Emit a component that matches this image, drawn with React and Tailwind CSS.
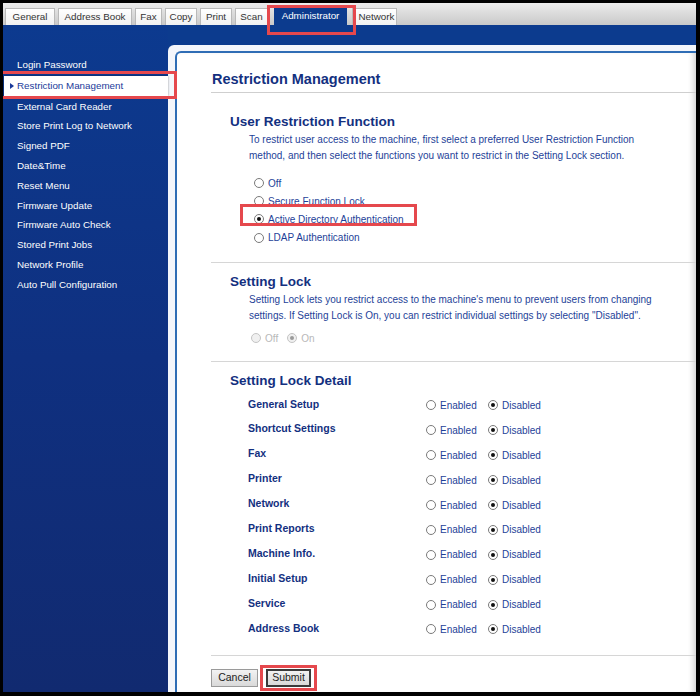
import React from "react";

const tabs = [
  { label: "General", w: 50 },
  { label: "Address Book", w: 74 },
  { label: "Fax", w: 27 },
  { label: "Copy", w: 32 },
  { label: "Print", w: 32 },
  { label: "Scan", w: 33 },
];

const sideItems = [
  "External Card Reader",
  "Store Print Log to Network",
  "Signed PDF",
  "Date&Time",
  "Reset Menu",
  "Firmware Update",
  "Firmware Auto Check",
  "Stored Print Jobs",
  "Network Profile",
  "Auto Pull Configuration",
];

const detailRows = [
  "General Setup",
  "Shortcut Settings",
  "Fax",
  "Printer",
  "Network",
  "Print Reports",
  "Machine Info.",
  "Initial Setup",
  "Service",
  "Address Book",
];

function Radio({ checked, disabled }) {
  return (
    <span
      className={
        disabled
          ? "inline-flex h-[10px] w-[10px] shrink-0 items-center justify-center rounded-full border border-[#c4c4c4] bg-[#f0f0f0]"
          : "inline-flex h-[10px] w-[10px] shrink-0 items-center justify-center rounded-full border border-[#7a7a7a] bg-white"
      }
    >
      {checked ? (
        <span
          className={
            disabled
              ? "h-[4px] w-[4px] rounded-full bg-[#9a9a9a]"
              : "h-[4px] w-[4px] rounded-full bg-[#111]"
          }
        />
      ) : null}
    </span>
  );
}

export default function App() {
  return (
    <div className="h-[696px] w-[700px] bg-black pb-[4px] pl-[3px] pr-[4px] pt-[3px] font-['Liberation_Sans',Arial,sans-serif]">
      <div className="relative flex h-full flex-col overflow-hidden bg-white">
        {/* tab bar */}
        <div className="flex h-[22px] shrink-0 items-end gap-[3px] bg-gradient-to-b from-[#ececec] to-[#c9c9c9] pl-[2px]">
          {tabs.map((t) => (
            <div
              key={t.label}
              style={{ width: t.w }}
              className="flex h-[17px] items-center justify-center border border-b-0 border-[#b9b9b9] bg-gradient-to-b from-white to-[#f1f1f1] text-[9.8px] text-[#333]"
            >
              {t.label}
            </div>
          ))}
          <div className="relative ml-[3px] flex h-[17px] w-[73px] items-center justify-center bg-[#0c3b8e] text-[9.8px] text-white">
            Administrator
            <div className="absolute left-[-7px] top-[-3px] h-[30px] w-[89px] border-[3px] border-[#e5484d]" />
          </div>
          <div className="ml-[2px] flex h-[17px] w-[45px] items-center justify-center border border-b-0 border-[#b9b9b9] bg-gradient-to-b from-white to-[#f1f1f1] pl-[4px] text-[9.8px] text-[#333]">
            Network
          </div>
        </div>

        <div className="flex min-h-0 flex-1">
          {/* sidebar */}
          <div className="relative w-[165px] shrink-0 bg-gradient-to-b from-[#0c3a8f] via-[#0f3080] to-[#112a70] pt-[30px] text-[9.8px] text-white">
            <div className="flex h-[20px] items-center pl-[14px]">Login Password</div>
            <div className="relative flex h-[22px] items-center">
              <div className="ml-[1px] flex h-[20px] w-[164px] items-center bg-white pl-[6px] text-[#1a3a9a] shadow-[0_0_2px_rgba(0,0,0,0.4)]">
                <svg width="4" height="6" viewBox="0 0 4 6" className="mr-[3px]">
                  <path d="M0 0 L4 3 L0 6 Z" fill="#1a3a9a" />
                </svg>
                Restriction Management
              </div>
              <div className="absolute left-[-3px] top-[-4px] z-10 h-[28px] w-[177px] border-[3px] border-[#e5484d]" />
            </div>
            {sideItems.map((s) => (
              <div key={s} className="flex h-[19.8px] items-center pl-[14px]">
                {s}
              </div>
            ))}
          </div>

          {/* main */}
          <div className="flex min-w-0 flex-1 flex-col bg-[#0c3b8e]">
            <div className="h-[20px] shrink-0" />
            <div className="flex min-h-0 flex-1 flex-col rounded-tl-[6px] bg-[#f4f6fb] pl-[7px] pt-[6px]">
              <div className="flex min-h-0 flex-1 flex-col rounded-tl-[6px] border-l-2 border-t-2 border-[#2f6db5] bg-white pl-[34px] pt-[17px] shadow-[inset_-6px_0_6px_-4px_rgba(0,0,0,0.2)]">
                <div className="border-b border-[#cfcfcf] pb-[4px] pl-[1px] text-[14.5px] font-bold leading-[18px] text-[#13307f]">
                  Restriction Management
                </div>

                {/* User restriction function */}
                <div className="border-b border-[#d6d6d6] pb-[15px] pt-[20px]">
                  <div className="pl-[19px] text-[13.5px] font-bold leading-[17px] text-[#13307f]">
                    User Restriction Function
                  </div>
                  <div className="mt-[2px] pl-[38px] text-[10px] leading-[16px] text-[#1e3f98]">
                    To restrict user access to the machine, first select a preferred User Restriction Function
                    <br />
                    method, and then select the functions you want to restrict in the Setting Lock section.
                  </div>
                  <div className="mt-[10px] flex flex-col pl-[43px] text-[10px] text-[#1e3f98]">
                    <div className="flex h-[18px] items-center gap-[4px]">
                      <Radio />
                      Off
                    </div>
                    <div className="flex h-[18px] items-center gap-[4px]">
                      <Radio />
                      Secure Function Lock
                    </div>
                    <div className="relative flex h-[18.5px] items-center gap-[4px]">
                      <Radio checked />
                      Active Directory Authentication
                      <div className="absolute left-[-14px] top-[-6px] h-[22px] w-[177px] border-[3px] border-[#e5484d]" />
                    </div>
                    <div className="flex h-[18.5px] items-center gap-[4px]">
                      <Radio />
                      LDAP Authentication
                    </div>
                  </div>
                </div>

                {/* Setting lock */}
                <div className="border-b border-[#d6d6d6] pb-[15px] pt-[10px]">
                  <div className="pl-[19px] text-[13.5px] font-bold leading-[17px] text-[#13307f]">
                    Setting Lock
                  </div>
                  <div className="mt-[2px] pl-[38px] text-[10px] leading-[15.5px] text-[#1e3f98]">
                    Setting Lock lets you restrict access to the machine's menu to prevent users from changing
                    <br />
                    settings. If Setting Lock is On, you can restrict individual settings by selecting "Disabled".
                  </div>
                  <div className="mt-[7px] flex h-[16px] items-center pl-[40px] text-[10px] text-[#b8b8b8]">
                    <Radio disabled />
                    <span className="ml-[4px]">Off</span>
                    <span className="ml-[9px] inline-flex">
                      <Radio disabled checked />
                    </span>
                    <span className="ml-[4px]">On</span>
                  </div>
                </div>

                {/* Setting lock detail */}
                <div className="border-b border-[#d6d6d6] pb-[13px] pt-[10px]">
                  <div className="pl-[19px] text-[13.5px] font-bold leading-[17px] text-[#13307f]">
                    Setting Lock Detail
                  </div>
                  <div className="mt-[4px] flex flex-col pl-[37px]">
                    {detailRows.map((r) => (
                      <div key={r} className="flex h-[24.9px] items-center text-[10px]">
                        <div className="mt-[-2px] w-[178px] text-[10.5px] font-bold text-[#13307f]">{r}</div>
                        <Radio />
                        <span className="ml-[4px] w-[48px] text-[#1e3f98]">Enabled</span>
                        <Radio checked />
                        <span className="ml-[4px] text-[#1e3f98]">Disabled</span>
                      </div>
                    ))}
                  </div>
                </div>

                {/* buttons */}
                <div className="flex items-center gap-[8px] pt-[13px]">
                  <button className="flex h-[18px] w-[47px] items-center justify-center border border-[#9a9a9a] bg-gradient-to-b from-[#f2f2f2] to-[#d9d9d9] text-[10.5px] text-[#222]">
                    Cancel
                  </button>
                  <div className="relative">
                    <button className="flex h-[18px] w-[45px] items-center justify-center border-2 border-[#3a3a3a] bg-gradient-to-b from-[#f2f2f2] to-[#d9d9d9] text-[10.5px] text-[#222]">
                      Submit
                    </button>
                    <div className="absolute left-[-6px] top-[-4px] h-[26px] w-[57px] border-[3px] border-[#e5484d]" />
                  </div>
                </div>
              </div>
            </div>
          </div>
        </div>
      </div>
    </div>
  );
}
